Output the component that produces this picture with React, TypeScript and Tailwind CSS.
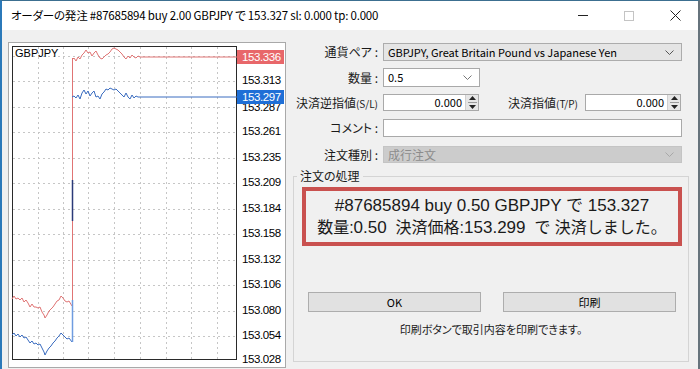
import React from "react";

const bluePre: [number, number][] = [
  [12, 335], [14, 333], [16, 336], [18, 334], [20, 337], [22, 335], [24, 338], [26, 337], [28, 340], [30, 343],
  [32, 341], [34, 344], [36, 343], [38, 345], [40, 344], [42, 348], [44, 352], [45, 355], [47, 351], [49, 348],
  [51, 346], [53, 343], [55, 341], [57, 338], [59, 336], [61, 333], [63, 335], [65, 337], [67, 339], [69, 338], [72, 342],
];

const redPost: [number, number][] = [
  [72, 60], [74, 58], [76, 61], [78, 57], [80, 59], [82, 55], [84, 53], [86, 50], [88, 53], [90, 52], [92, 56],
  [94, 53], [96, 51], [98, 55], [100, 58], [102, 59], [104, 57], [106, 55], [108, 54], [110, 52], [112, 49],
  [114, 48], [116, 49], [118, 50], [120, 52], [122, 54], [124, 57], [126, 59], [128, 56], [130, 58], [132, 55],
  [134, 57], [136, 58], [138, 56], [140, 57], [237, 57],
];

const bluePost: [number, number][] = [
  [72, 97], [74, 96], [76, 98], [78, 95], [80, 99], [82, 93], [84, 90], [86, 94], [88, 91], [90, 96], [92, 93],
  [94, 91], [96, 97], [98, 96], [100, 99], [102, 94], [104, 92], [106, 89], [108, 90], [110, 88], [112, 89],
  [114, 90], [116, 89], [118, 91], [120, 93], [122, 95], [124, 97], [126, 93], [128, 97], [130, 99], [132, 95],
  [134, 98], [136, 96], [138, 97], [140, 97], [237, 97],
];

const pts = (a: [number, number][]) => a.map(([x, y]) => `${x},${y}`).join(" ");
const redPre = bluePre.map(([x, y], i) => [x, y - 37 + (i % 3 === 0 ? 1 : 0)] as [number, number]);

const ticks: [string, number][] = [
  ["153.313", 81], ["153.287", 108], ["153.261", 132], ["153.235", 157.5], ["153.209", 183],
  ["153.184", 208.5], ["153.158", 234], ["153.132", 259.5], ["153.106", 285], ["153.080", 310.5],
  ["153.054", 336], ["153.028", 360],
];
const gridY = [55.5, 81, 106.5, 132, 157.5, 183, 208.5, 234, 259.5, 285, 310.5, 336];
const vGrid = [38, 63, 88, 114, 140, 166, 191, 217];

function Chart() {
  return (
    <svg width="278" height="326" viewBox="8 42 278 326" className="shrink-0 block">
      <rect x="8.5" y="42.5" width="277" height="325" fill="#ffffff" stroke="#a9a9a9" />
      {vGrid.map((x) => (
        <line key={x} x1={x + 0.5} y1="47" x2={x + 0.5} y2="360" stroke="#c6c6c6" strokeDasharray="2 3" />
      ))}
      {gridY.map((y) => (
        <line key={y} x1="13" y1={Math.round(y) + 0.5} x2="237" y2={Math.round(y) + 0.5} stroke="#c6c6c6" strokeDasharray="2 3" />
      ))}
      <rect x="12.5" y="46.5" width="224" height="313" fill="none" stroke="#2a2a2a" />
      <text x="15" y="57" fontSize="11" fontFamily="Liberation Sans, sans-serif" fill="#000">GBPJPY</text>

      <polyline points={pts(redPre)} fill="none" stroke="#e07474" strokeWidth="1" />
      <line x1="72.5" y1="303" x2="72.5" y2="58" stroke="#e07474" />
      <polyline points={pts(redPost)} fill="none" stroke="#e07474" strokeWidth="1" />

      <polyline points={pts(bluePre)} fill="none" stroke="#3a6cc0" strokeWidth="1" />
      <line x1="72.5" y1="342" x2="72.5" y2="300" stroke="#6f9ce0" strokeWidth="1.5" />
      <line x1="72.5" y1="180" x2="72.5" y2="221" stroke="#2b3a78" strokeWidth="1.5" />
      <polyline points={pts(bluePost)} fill="none" stroke="#3a6cc0" strokeWidth="1" />

      {ticks.map(([t, y]) => (
        <text key={t} x="242" y={y} dominantBaseline="middle" fontSize="11.5" letterSpacing="-0.4" fontFamily="Liberation Sans, sans-serif" fill="#000">
          {t}
        </text>
      ))}
      <rect x="237" y="50" width="47" height="14" fill="#e8676a" />
      <text x="242" y="57.5" dominantBaseline="middle" fontSize="11.5" letterSpacing="-0.4" fontFamily="Liberation Sans, sans-serif" fill="#fff">153.336</text>
      <rect x="237" y="90" width="47" height="14" fill="#1f6fd6" />
      <text x="242" y="97.5" dominantBaseline="middle" fontSize="11.5" letterSpacing="-0.4" fontFamily="Liberation Sans, sans-serif" fill="#fff">153.297</text>
    </svg>
  );
}

function Chevron({ color = "#555" }: { color?: string }) {
  return (
    <svg width="9" height="5" viewBox="0 0 9 5" className="ml-auto mr-[7px] shrink-0">
      <polyline points="0.5,0.5 4.5,4.5 8.5,0.5" fill="none" stroke={color} strokeWidth="1" />
    </svg>
  );
}

function Spinner() {
  return (
    <div className="w-[13px] h-full bg-[#e6e6e6] border-l border-[#d0d0d0] flex flex-col items-center justify-center gap-[2px] ml-[3px]">
      <svg width="7" height="4" viewBox="0 0 7 4"><polygon points="0,4 3.5,0 7,4" fill="#222" /></svg>
      <div className="w-[9px] h-px bg-[#9a9a9a]" />
      <svg width="7" height="4" viewBox="0 0 7 4"><polygon points="0,0 3.5,4 7,0" fill="#222" /></svg>
    </div>
  );
}

function Label({ children, w = "w-[85px]" }: { children: React.ReactNode; w?: string }) {
  return <div className={`${w} shrink-0 text-right text-[12px] whitespace-nowrap text-[#1a1a1a]`}>{children}</div>;
}

export default function App() {
  return (
    <div className="w-[700px] h-[369px] overflow-hidden bg-[#f0f0f0] border-l-2 border-l-[#2b79b9] border-r-2 border-r-[#66737c] border-t border-t-[#3c6f90] flex flex-col font-['Noto_Sans_CJK_JP','Noto_Sans',sans-serif] [font-feature-settings:'palt'] text-black">
      <div className="h-[29px] shrink-0 bg-white flex items-center pl-[9px]">
        <span className="text-[11.5px] tracking-[-0.2px] whitespace-nowrap">オーダーの発注 #87685894 buy 2.00 GBPJPY で 153.327 sl: 0.000 tp: 0.000</span>
        <div className="ml-auto flex h-full">
          <div className="w-[46px] flex items-center justify-center">
            <div className="w-[10px] h-px bg-[#222]" />
          </div>
          <div className="w-[46px] flex items-center justify-center">
            <div className="w-[10px] h-[10px] border border-[#c4c4c4]" />
          </div>
          <div className="w-[46px] flex items-center justify-center">
            <svg width="11" height="11" viewBox="0 0 11 11">
              <path d="M0.5 0.5 L10.5 10.5 M10.5 0.5 L0.5 10.5" stroke="#222" strokeWidth="1" />
            </svg>
          </div>
        </div>
      </div>

      <div className="flex flex-1 pl-[6px] pt-[12px]">
        <Chart />

        <div className="ml-[7px] w-[396px] flex flex-col pt-[1px]">
          <div className="flex items-center h-[18px]">
            <Label>通貨ペア&nbsp;:</Label>
            <div className="ml-[5px] w-[299px] h-full bg-[#e5e5e5] border border-[#acacac] flex items-center pl-[4px] text-[11px] whitespace-nowrap">
              GBPJPY, Great Britain Pound vs Japanese Yen
              <Chevron />
            </div>
          </div>

          <div className="flex items-center h-[19px] mt-[7px]">
            <Label>数量&nbsp;:</Label>
            <div className="ml-[5px] w-[97px] h-full bg-white border border-[#a9a9a9] flex items-center pl-[4px] text-[11px]">
              0.5
              <Chevron color="#777" />
            </div>
          </div>

          <div className="flex items-center h-[17px] mt-[7px]">
            <Label>
              決済逆指値<span className="text-[10px]">(S/L)</span>
            </Label>
            <div className="ml-[5px] w-[96px] h-full bg-white border border-[#a9a9a9] flex items-center justify-end text-[11px]">
              0.000
              <Spinner />
            </div>
            <Label w="w-[99px]">
              決済指値<span className="text-[10px]">(T/P)</span>
            </Label>
            <div className="ml-[7px] w-[96px] h-full bg-white border border-[#a9a9a9] flex items-center justify-end text-[11px]">
              0.000
              <Spinner />
            </div>
          </div>

          <div className="flex items-center h-[18px] mt-[8px]">
            <Label>コメント&nbsp;:</Label>
            <div className="ml-[5px] w-[299px] h-full bg-white border border-[#a9a9a9]" />
          </div>

          <div className="flex items-center h-[17px] mt-[9px]">
            <Label>注文種別&nbsp;:</Label>
            <div className="ml-[5px] w-[299px] h-full bg-[#cccccc] border border-[#c4c4c4] flex items-center pl-[4px] text-[12px] text-[#8c8c8c]">
              成行注文
              <Chevron color="#a8a8a8" />
            </div>
          </div>

          <fieldset className="mt-[6px] h-[193px] border border-[#d4d4d4] flex flex-col">
            <legend className="ml-[3px] px-[3px] text-[12px] leading-[14px] text-[#1a1a1a]">注文の処理</legend>
            <div className="mt-[4px] ml-[8px] w-[380px] h-[59px] border-[4px] border-[#c9514f] flex flex-col items-center justify-center gap-[2px] text-[#1a1a1a] font-['Liberation_Sans','Noto_Sans_CJK_JP',sans-serif] [font-feature-settings:normal]">
              <div className="text-[17px] leading-[20px] whitespace-nowrap">#87685894 buy 0.50 GBPJPY で 153.327</div>
              <div className="text-[16px] leading-[20px] whitespace-nowrap">
                数量:<span className="text-[17px]">0.50</span>&nbsp;&nbsp;決済価格:<span className="text-[17px]">153.299</span>&nbsp;&nbsp;で 決済しました。
              </div>
            </div>
            <div className="flex mt-[46px] ml-[14px] gap-[22px]">
              <div className="w-[173px] h-[20px] bg-[#e1e1e1] border border-[#adadad] flex items-center justify-center text-[11px]">OK</div>
              <div className="w-[173px] h-[20px] bg-[#e1e1e1] border border-[#adadad] flex items-center justify-center text-[11px]">印刷</div>
            </div>
            <div className="mt-[9px] text-center text-[11px] leading-[16px] text-[#1a1a1a]">印刷ボタンで取引内容を印刷できます。</div>
          </fieldset>
        </div>
      </div>
    </div>
  );
}
